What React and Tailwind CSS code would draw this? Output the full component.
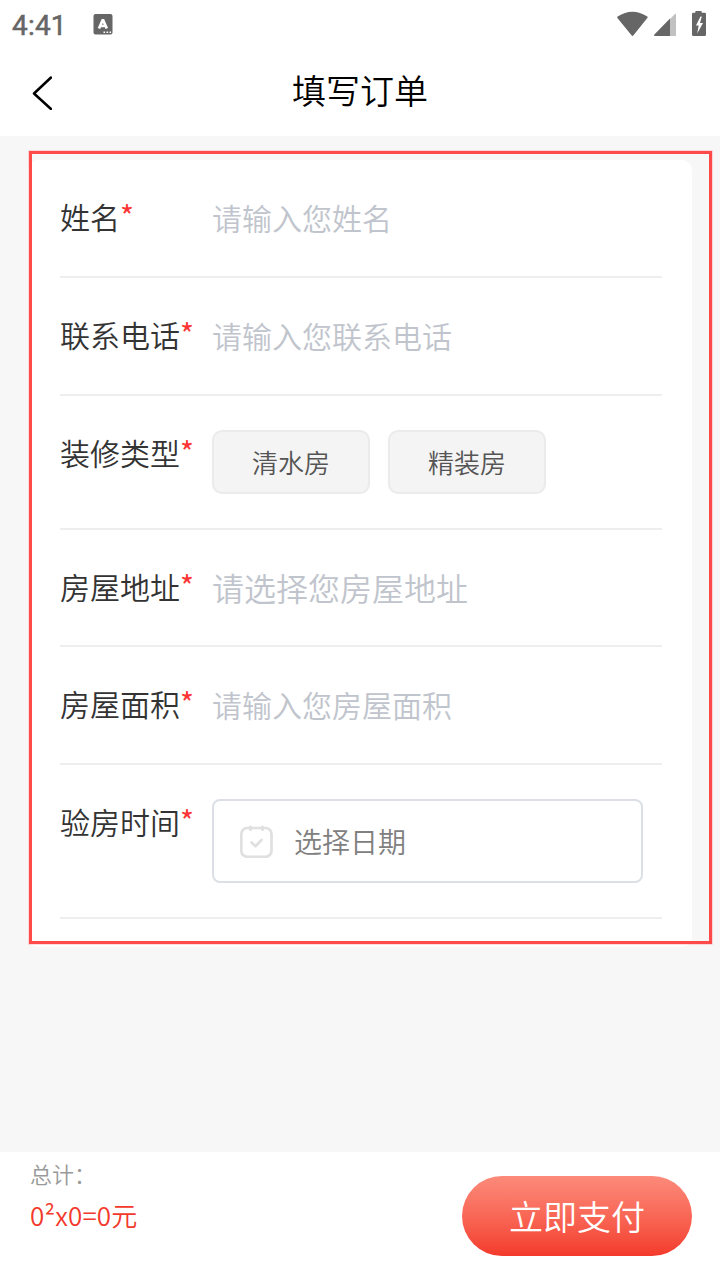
function StatusBar() {
  return (
    <div className="flex h-12 items-center bg-white pl-3 pr-[13px] pt-px font-['Roboto',sans-serif] text-[#666]">
      <span className="w-[54px] pt-[3px] text-[28px] font-normal leading-none tracking-[0.2px] [-webkit-text-stroke:0.5px_#666]">4:41</span>
      <svg className="ml-[27px] mb-px h-[21px] w-5" viewBox="0 0 20 21">
        <rect x="0.5" width="19" height="20.5" rx="2" fill="#666" />
        <path d="M6 14.500 9.900 5.500l3.900 9M7.400 12h5" fill="none" stroke="#fff" strokeWidth="2.700" strokeLinejoin="bevel" />
        <path d="M10.500 18.300h1.600M13.500 18.300h1.600M16.500 18.300h1.600" stroke="#fff" strokeWidth="1.500" />
      </svg>
      <svg className="ml-auto h-7 w-[90px]" viewBox="0 0 90 28">
        <path d="M0.600 5.500Q15.500-4.200 30.300 5.500Q31 6 30.300 7L16.500 24.200Q15.500 25.600 14.500 24.200L0.400 7Q0 6 0.600 5.500Z" fill="#666" />
        <path d="M58.500 2.500 53 8v17h6V3.500Q59 2.500 58.500 2.500Z" fill="#c1c1c1" />
        <path d="M53 7.500V25H38Q36.500 25 37.400 23.500Z" fill="#666" />
        <path d="M79 0h5q.7 0 .7.7V1.800h3q1.300 0 1.300 1.300V23.700q0 1.300-1.300 1.300H76.300Q75 25 75 23.700V3.100q0-1.300 1.300-1.300h2V.7Q78.300 0 79 0Z" fill="#666" />
        <path d="M83.500 5.500 79 14.500h2.700L80.200 22.500 86 12h-3l1.800-6.500Z" fill="#fff" />
      </svg>
    </div>
  );
}

function Row({ label, height, children }) {
  return (
    <div className={`flex border-b-2 border-[#eee] ${height}`}>
      <div className="flex w-[152px] shrink-0 whitespace-nowrap pt-[34px] text-[30px] leading-[44px] text-[#333]">
        {label}
        <span className="-mt-px font-normal text-[#fa3534]">*</span>
      </div>
      {children}
    </div>
  );
}

function Placeholder({ children, large }) {
  return (
    <div className={`whitespace-nowrap text-[#c0c4cc] ${large ? "pt-[35px] text-[32px] leading-[44px]" : "pt-[35px] text-[30px] leading-[44px]"}`}>
      {children}
    </div>
  );
}

function Choice({ children }) {
  return (
    <button className="mt-[34px] flex h-16 w-[158px] items-center justify-center rounded-[10px] border-2 border-[#ebebeb] bg-[#f4f4f4] pb-[2px] text-[26px] text-[#555]">
      {children}
    </button>
  );
}

function DateField() {
  return (
    <div className="mt-[34px] flex h-[84px] w-[431px] items-center rounded-lg border-2 border-[#dcdfe6] pl-[25px] text-[28px] text-[#808080]">
      <svg className="mr-[20px] h-[34px] w-[35px]" viewBox="0 0 35 34" fill="none" stroke="#e0e0e0" strokeWidth="2.700" strokeLinecap="round" strokeLinejoin="round">
        <path d="M11.500 5.500V3M23.500 5.500V3" strokeWidth="3" />
        <rect x="2.300" y="4" width="30.200" height="28.800" rx="6" />
        <path d="m12.500 18.500 4 3.700 6-6.200" />
      </svg>
      <span className="-mt-px">选择日期</span>
    </div>
  );
}

export default function App() {
  return (
    <div className="relative flex h-[1280px] w-[720px] flex-col overflow-hidden bg-[#f7f7f7] font-['Noto_Sans_CJK_SC',sans-serif] font-[350]">
      <StatusBar />
      <header className="flex h-22 items-center bg-white pl-8 pr-[52px]">
        <svg className="h-9 w-5" viewBox="0 0 20 36" fill="none" stroke="#000" strokeWidth="2.500" strokeLinecap="round" strokeLinejoin="round">
          <path d="M19 3.500 2 19.500 19 35" />
        </svg>
        <h1 className="flex-1 pb-[5px] text-center text-[34px] font-[350] leading-[44px] text-black">填写订单</h1>
      </header>
      <main className="flex-1 pl-[28px] pr-[28px] pt-6">
        <section className="h-[787px] rounded-[10px] bg-white pl-8 pr-[30px]">
          <Row label="姓名" height="h-[118px]">
            <Placeholder>请输入您姓名</Placeholder>
          </Row>
          <Row label="联系电话" height="h-[118px]">
            <Placeholder>请输入您联系电话</Placeholder>
          </Row>
          <Row label="装修类型" height="h-[134px]">
            <div className="flex gap-[18px]">
              <Choice>清水房</Choice>
              <Choice>精装房</Choice>
            </div>
          </Row>
          <Row label="房屋地址" height="h-[117px]">
            <Placeholder large>请选择您房屋地址</Placeholder>
          </Row>
          <Row label="房屋面积" height="h-[118px]">
            <Placeholder>请输入您房屋面积</Placeholder>
          </Row>
          <Row label="验房时间" height="h-[154px]">
            <DateField />
          </Row>
        </section>
      </main>
      <footer className="flex h-32 justify-between bg-white pl-[30px] pr-7">
        <div className="pt-[5px]">
          <div className="text-[22px] leading-8 text-[#999]">总计：</div>
          <div className="mt-[7px] text-[26px] leading-[38px] tracking-[0.15px] text-[#f3392b]">0²x0=0元</div>
        </div>
        <button className="mt-6 flex h-20 w-[230px] items-center justify-center rounded-full bg-linear-to-b from-[#fc8a7a] to-[#f3392b] pb-px text-[34px] text-white">
          立即支付
        </button>
      </footer>
      <div className="pointer-events-none absolute left-[29px] top-[151px] h-[793px] w-[683px] border-[3px] border-[#ff4a4a] shadow-[0_0_0_0.5px_rgba(255,74,74,0.4)]" />
    </div>
  );
}
